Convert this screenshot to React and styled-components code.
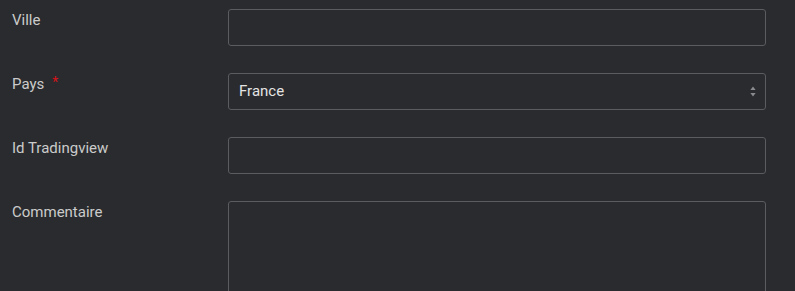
import React from "react";
import styled, { createGlobalStyle } from "styled-components";

const Global = createGlobalStyle`
  html, body { margin: 0; padding: 0; background: #2a2b2e; }
  body { font-family: Roboto, "Liberation Sans", sans-serif; }
  * { box-sizing: border-box; }
`;

const Form = styled.form`
  display: flex;
  flex-direction: column;
  gap: 27px;
  padding: 9px 29px 0 12px;
  width: 795px;
  height: 291px;
  overflow: hidden;
  background: #2a2b2e;
`;

const Row = styled.div`
  display: grid;
  grid-template-columns: 216px 1fr;
  align-items: start;
`;

const Label = styled.label`
  font-size: 15px;
  line-height: 20px;
  padding-top: 1px;
  color: #cbcbcb;
  display: flex;
  align-items: flex-start;
`;

const Star = styled.span`
  color: #d4141a;
  font-size: 14px;
  line-height: 16px;
  margin-left: 8px;
`;

const fieldBase = `
  width: 100%;
  background: #2a2b2e;
  border: 1px solid #5b5c5f;
  border-radius: 3px;
  color: #e4e4e4;
  font-family: Roboto, "Liberation Sans", sans-serif;
  font-size: 15px;
  padding: 0 10px;
  outline: none;
`;

const Input = styled.input`
  ${fieldBase}
  height: 37px;
`;

const SelectBox = styled.div`
  ${fieldBase}
  height: 37px;
  display: flex;
  align-items: center;
  justify-content: space-between;
  padding-right: 9px;
  padding-bottom: 1px;
`;

const TextArea = styled.textarea`
  ${fieldBase}
  height: 120px;
  resize: none;
`;

const Arrows = () => (
  <svg width="6" height="11" viewBox="0 0 6 11">
    <path d="M3 0.5 L5.6 4 L0.4 4 Z" fill="#8a8b8e" />
    <path d="M3 10.5 L5.6 7 L0.4 7 Z" fill="#8a8b8e" />
  </svg>
);

export default function App() {
  return (
    <>
      <Global />
      <Form>
        <Row>
          <Label>Ville</Label>
          <Input type="text" />
        </Row>
        <Row>
          <Label>
            Pays<Star>*</Star>
          </Label>
          <SelectBox>
            <span>France</span>
            <Arrows />
          </SelectBox>
        </Row>
        <Row>
          <Label>Id Tradingview</Label>
          <Input type="text" />
        </Row>
        <Row>
          <Label>Commentaire</Label>
          <TextArea />
        </Row>
      </Form>
    </>
  );
}
